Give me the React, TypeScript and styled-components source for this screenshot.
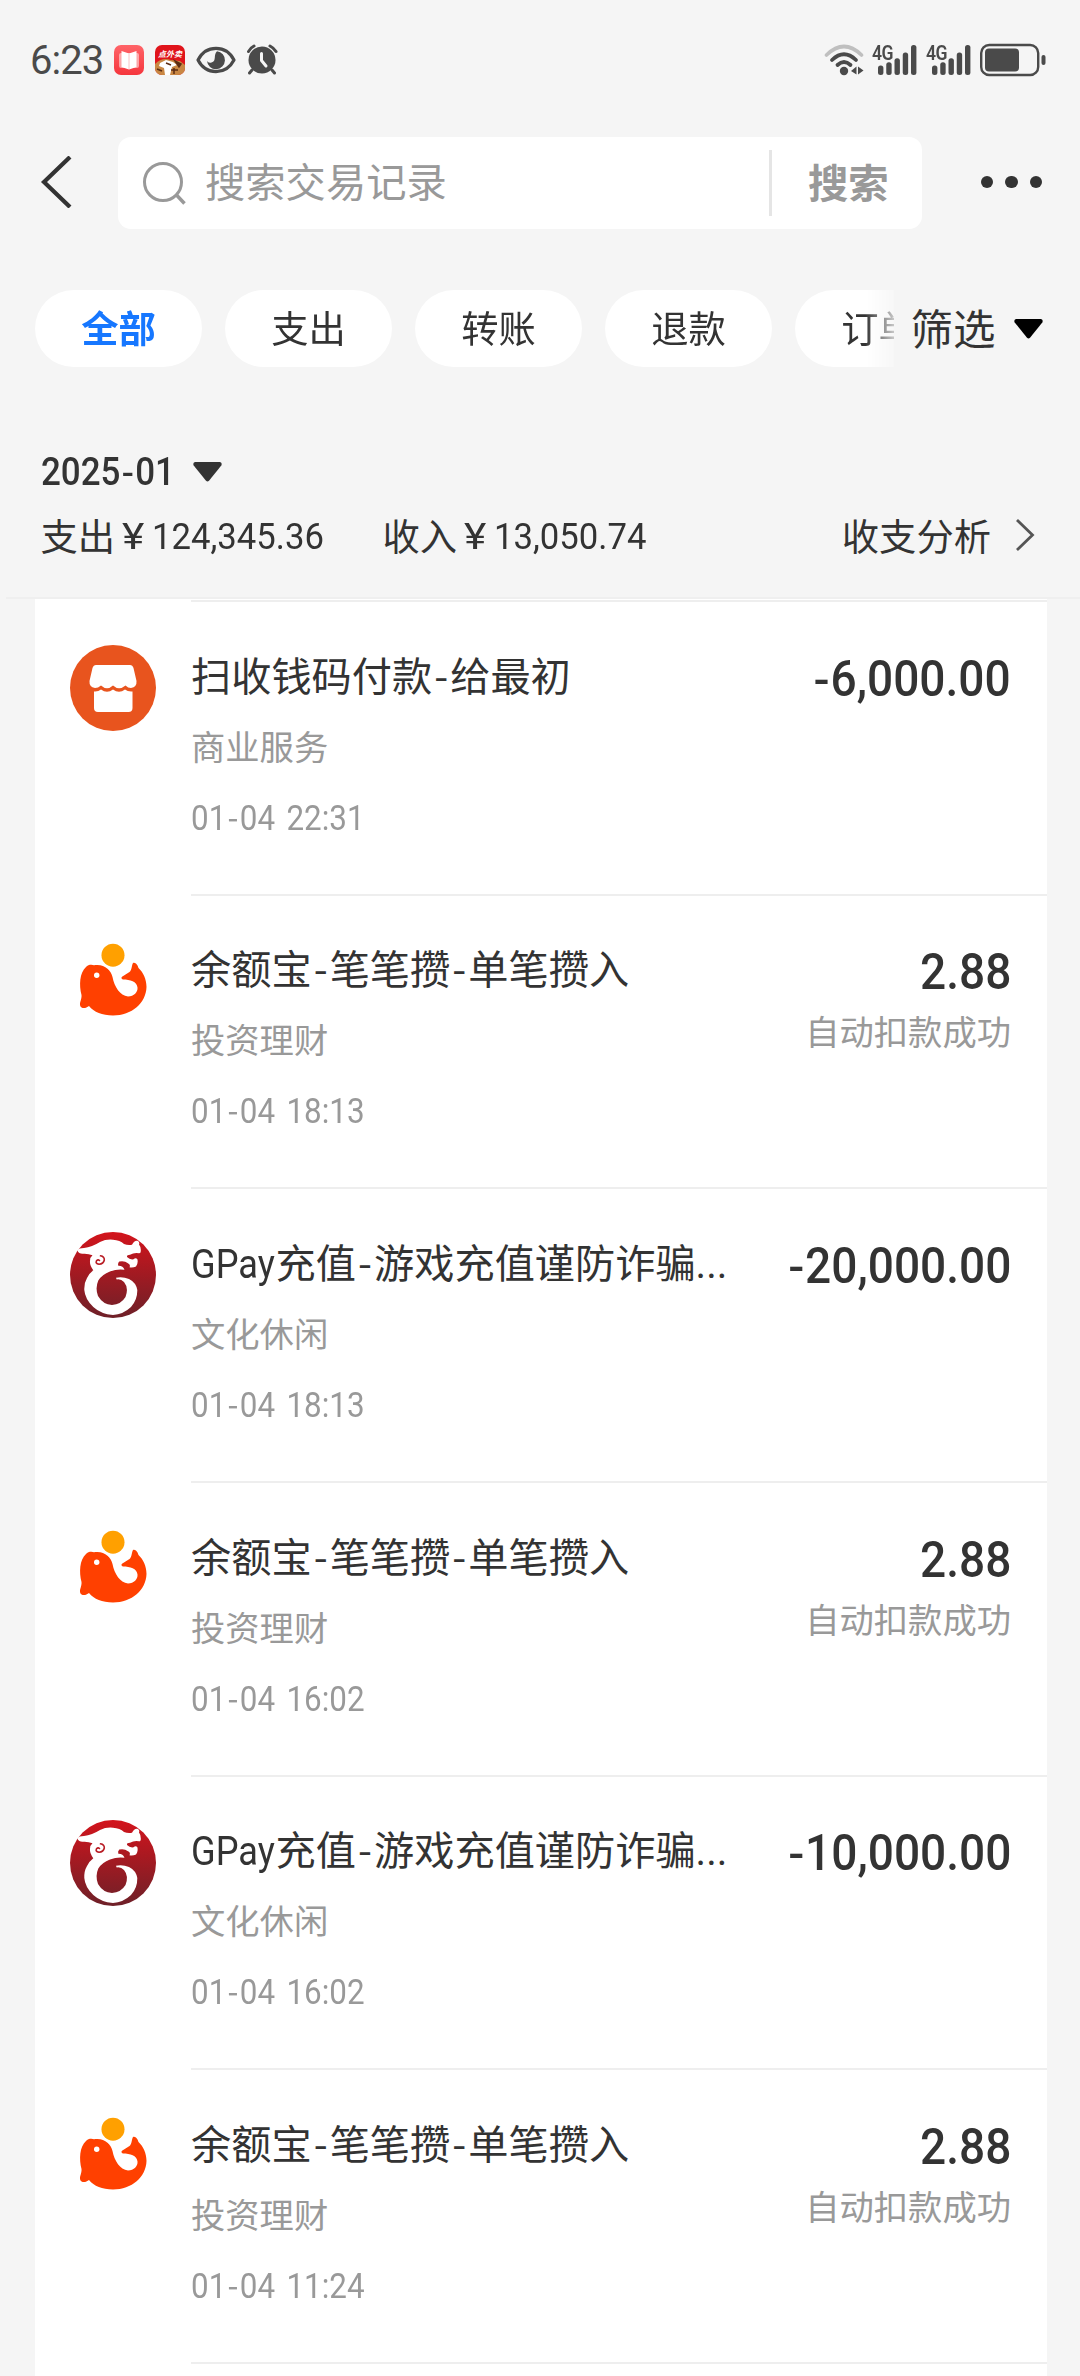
import React from "react";
import styled, { createGlobalStyle } from "styled-components";

const GlobalStyle = createGlobalStyle`
  html, body { margin: 0; padding: 0; background: #f5f5f5; }
  * { box-sizing: border-box; }
`;

const Screen = styled.div`
  width: 1080px;
  height: 2376px;
  overflow: hidden;
  display: flex;
  flex-direction: column;
  background: #f5f5f5;
  color: #333;
  font-family: Roboto, "Noto Sans CJK SC", sans-serif;
  white-space: nowrap;
`;

/* Status bar */

const StatusBar = styled.div`
  height: 119px;
  flex: none;
  display: flex;
  justify-content: space-between;
  align-items: center;
  padding: 0 34px 0 30px;
  color: #4a4a4a;
`;

const StatusGroup = styled.div<{ $gap: number }>`
  display: flex;
  align-items: center;
  gap: ${(p) => p.$gap}px;
`;

const Clock = styled.div`
  width: 73px;
  padding-top: 2px;
  font-size: 40px;
  line-height: 48px;
  letter-spacing: -1px;
`;

const AppBadge = styled.div<{ $fill: string }>`
  width: 30px;
  height: 30px;
  border-radius: 7px;
  overflow: hidden;
  background: ${(p) => p.$fill};
  display: flex;
  flex-direction: column;
  align-items: center;
`;

const BadgeLabel = styled.div`
  height: 14px;
  padding-top: 3px;
  font: italic 700 8px/11px "Noto Sans CJK SC", sans-serif;
  color: #fff;
`;

const Signal = styled.div`
  position: relative;
  width: 46px;
  height: 30px;
`;

const SignalType = styled.span`
  position: absolute;
  left: 0;
  top: -2px;
  font-size: 20px;
  font-weight: 600;
  line-height: 20px;
  letter-spacing: -0.5px;
  transform: scaleX(0.88);
  transform-origin: left;
`;

/* Search header */

const Header = styled.header`
  height: 129px;
  flex: none;
  display: flex;
  align-items: flex-start;
  padding: 18px 38px 0 40px;
`;

const BackButton = styled.div`
  width: 78px;
  height: 90px;
  display: flex;
  align-items: center;
`;

const SearchBox = styled.div`
  width: 804px;
  height: 92px;
  border-radius: 13px;
  background: #fff;
  display: flex;
  align-items: center;
  padding-left: 24px;
  color: #999;
  font-size: 40.3px;
  line-height: 60px;
`;

const Placeholder = styled.div`
  flex: 1;
  padding: 2px 0 0 17px;
`;

const SearchDivider = styled.div`
  width: 3px;
  height: 66px;
  background: #e5e5e5;
`;

const SearchAction = styled.div`
  width: 150px;
  padding: 4px 0 0 36px;
  font-weight: 600;
`;

const MoreButton = styled.div`
  flex: 1;
  height: 90px;
  display: flex;
  align-items: center;
  justify-content: flex-end;
  gap: 12px;
`;

const Dot = styled.i`
  width: 12.5px;
  height: 12.5px;
  border-radius: 50%;
  background: #333;
`;

/* Filter chips */

const Filters = styled.nav`
  height: 119px;
  padding: 42px 0 0 35px;
  flex: none;
  display: flex;
  align-items: flex-start;
`;

const ChipList = styled.div`
  width: 858.5px;
  display: flex;
  gap: 23px;
  overflow: hidden;
  mask-image: linear-gradient(to right, #000 830px, transparent 868px);
`;

const Chip = styled.div<{ $active?: boolean }>`
  flex: none;
  width: 167px;
  height: 77px;
  border-radius: 39px;
  background: #fff;
  display: flex;
  align-items: center;
  justify-content: center;
  padding-bottom: 3px;
  font-size: 37.3px;
  font-weight: ${(p) => (p.$active ? 700 : 400)};
  color: ${(p) => (p.$active ? "#1677ff" : "#333")};
`;

const FilterButton = styled.div`
  height: 77px;
  display: flex;
  align-items: center;
  gap: 18px;
  padding-left: 17px;
  font-size: 42.5px;
`;

const FilterLabel = styled.span`
  padding-bottom: 4px;
`;

/* Monthly summary */

const Summary = styled.section`
  height: 230px;
  flex: none;
  padding: 82px 45px 0 40.5px;
  display: flex;
  flex-direction: column;
`;

const MonthPicker = styled.div`
  height: 46px;
  display: flex;
  align-items: center;
  font-size: 38px;
  font-weight: 500;
`;

const MonthLabel = styled.div`
  width: 152px;
`;

const Totals = styled.div`
  height: 46px;
  margin-top: 17px;
  display: flex;
  align-items: center;
  font-size: 37.3px;
`;

const Total = styled.div<{ $width: number }>`
  width: ${(p) => p.$width}px;
  display: flex;
  align-items: center;
`;

const Yen = styled.span`
  width: 21px;
  margin: 1px 9px 0 7px;
  transform: scaleX(1.14);
  transform-origin: left center;
`;

const Figure = styled.span`
  padding-top: 1px;
`;

const Analysis = styled.div`
  margin-left: auto;
  display: flex;
  align-items: center;
  gap: 24px;
`;

const SummaryRule = styled.div`
  height: 2px;
  margin-left: 6px;
  flex: none;
  background: #efefef;
`;

/* Shared text parts */

const Digits = styled.span<{ $squeeze: number; $anchor?: string }>`
  display: inline-block;
  word-spacing: 4px;
  transform: scaleX(${(p) => p.$squeeze});
  transform-origin: ${(p) => p.$anchor || "left"} center;
`;

const Dash = styled.span<{ $em: number }>`
  display: inline-block;
  width: ${(p) => p.$em}em;
  text-align: center;
  font-family: "Noto Sans CJK SC", sans-serif;
  line-height: 1;
`;

const Latin = styled.span`
  display: inline-block;
  margin-right: -8.5px;
  transform: scaleX(0.9);
  transform-origin: left center;
`;

/* Transactions */

const Card = styled.main`
  margin: 0 33.5px 0 35px;
  flex: 1;
  padding-top: 1px;
  background: #fff;
`;

const Row = styled.article`
  height: 293.7px;
  display: flex;
`;

const Avatar = styled.div`
  width: 156px;
  padding: 45px 0 0 35px;
`;

const Details = styled.div`
  flex: 1;
  border-top: 2px solid #eee;
  padding-right: 35.5px;
  display: flex;
  justify-content: space-between;
`;

const Description = styled.div`
  padding-top: 51.5px;
  display: flex;
  flex-direction: column;
`;

const Title = styled.div`
  height: 48px;
  font-size: 40.2px;
  line-height: 48px;
`;

const Meta = styled.div<{ $top: number }>`
  height: 40px;
  margin-top: ${(p) => p.$top}px;
  font-size: 34.3px;
  line-height: 40px;
  color: #999;
`;

const Value = styled.div`
  padding-top: 46.5px;
  text-align: right;
`;

const Amount = styled.div`
  height: 60px;
  font-size: 50.6px;
  font-weight: 500;
  line-height: 60px;
`;

const State = styled.div`
  margin-top: 11px;
  font-size: 34.3px;
  line-height: 40px;
  color: #999;
`;

function withDashes(text: string, em: number) {
  return text.split("-").map((part, i) => (
    <React.Fragment key={i}>
      {i > 0 && <Dash $em={em}>-</Dash>}
      {part.startsWith("GPay") ? (
        <>
          <Latin>GPay</Latin>
          {part.slice(4)}
        </>
      ) : (
        part
      )}
    </React.Fragment>
  ));
}

const EyeIcon = () => (
  <svg width="40" height="28" viewBox="0 0 40 28">
    <path d="M2 14C10 -1.5 30 -1.5 38 14C30 29.500 10 29.500 2 14Z" fill="none" stroke="#4a4a4a" strokeWidth="3.2" strokeLinejoin="round" />
    <path d="M21 5.200A9 9 0 1 1 11 15Q12.500 17.500 15.500 16.500C21 15 17 9 21 5.200Z" fill="#4a4a4a" />
  </svg>
);

const AlarmIcon = () => (
  <svg width="32" height="31" viewBox="1 0 32 31" fill="none" stroke="#4a4a4a" strokeLinecap="round">
    <circle cx="16" cy="16" r="13.500" fill="#4a4a4a" stroke="none" />
    <path d="M2.500 7.500Q4 4 8 2M30 7.500Q28 4 24 2M6 26L3.500 29M26 26L28.500 29" strokeWidth="3" />
    <path d="M15.500 9.500V16.500L20 22" stroke="#f5f5f5" strokeWidth="3" strokeLinejoin="round" />
  </svg>
);

const BookIcon = () => (
  <svg width="30" height="30" viewBox="0 0 30 30">
    <rect x="5" y="8" width="20" height="15" rx="2" fill="#fff" opacity=".5" />
    <path d="M7.500 6L15 8.500L22.500 6V22L15 24.500L7.500 22Z" fill="#fff" />
    <path d="M15 8.500V24" stroke="#f9b5b7" strokeWidth=".8" />
  </svg>
);

const MascotArt = () => (
  <svg width="30" height="16" viewBox="0 0 30 16">
    <path d="M0 5Q7 -2 16 1L25 2L30 6V16H0Z" fill="#c98743" />
    <path d="M5 4L11 1L18 3L22 6L17 8L15 16H10L9 9L4 7Z" fill="#fff" />
    <path d="M20 2L26 5L24 8ZM11 4l5 2M16 11h7M19 9v6M2 10l5 2" stroke="#5c2d14" strokeWidth="1.500" fill="#5c2d14" />
  </svg>
);

const WifiIcon = () => (
  <svg width="40" height="32" viewBox="0 0 40 32" fill="none" strokeLinecap="round">
    <path d="M2.500 11Q20 -6 37.500 11" stroke="#bfbfbf" strokeWidth="3.600" />
    <path d="M8 16Q20 4.500 32 16" stroke="#4a4a4a" strokeWidth="3.800" />
    <path d="M13.500 21Q20 15 26.500 21" stroke="#4a4a4a" strokeWidth="3.800" />
    <circle cx="20" cy="27" r="4.200" fill="#4a4a4a" />
    <path d="M32.500 22.500V30.500L27 27ZM34 22.500V30.500L39.500 26.500Z" fill="#4a4a4a" />
  </svg>
);

const SignalBars = () => (
  <svg width="46" height="30" viewBox="0 0 46 30" fill="#4a4a4a">
    {[20.5, 17.3, 13.3, 7.6, 0].map((top, i) => (
      <rect key={i} x={6 + i * 8.25} y={top} width="5.400" height={30 - top} rx="2.500" />
    ))}
  </svg>
);

const BatteryIcon = () => (
  <svg width="66" height="34" viewBox="0 0 66 34">
    <rect x="1.200" y="2" width="57" height="30" rx="8" fill="none" stroke="#4a4a4a" strokeWidth="2.400" />
    <rect x="5" y="5.500" width="34" height="23" rx="4" fill="#4a4a4a" />
    <rect x="61.500" y="12" width="4" height="10" rx="2" fill="#4a4a4a" />
  </svg>
);

const Caret = ({ color }: { color: string }) => (
  <svg width="29" height="20" viewBox="0 0 29 20">
    <path d="M2 0H27Q29.500 1 28.300 3.500L16 18.800Q14.500 20.400 13 18.800L.7 3.500Q-.5 1 2 0Z" fill={color} />
  </svg>
);

const ShopIcon = () => (
  <svg width="86" height="86" viewBox="0 0 86 86">
    <circle cx="43" cy="43" r="43" fill="#e8541e" />
    <path d="M26 20H60Q62.500 20 63.500 23L66.500 36Q67 42 61 43Q58 43 55.500 40.500Q49 46 43 40.500Q37 46 31 40.500Q28 43 25 43Q19 42 19.500 36L22.500 23Q23.500 20 26 20Z" fill="#fff" />
    <path d="M24 46.500Q28 47 31 44.500Q37 49 43 44.500Q49 49 55 44.500Q58 47 62.500 46.500V63Q62.500 67 58.500 67H28Q24 67 24 63Z" fill="#fff" />
  </svg>
);

const FishIcon = () => (
  <svg width="86" height="86" viewBox="0 0 86 86">
    <circle cx="43" cy="16.200" r="11.500" fill="#ffa000" />
    <g transform="translate(0 -1)">
      <path d="M16 29C18 26.500 22 26.500 24 27.300C34 25.500 41 32 42.500 39C44.500 49 50 57.500 58 58.500C64 58.500 68 54 67.500 49.500C67 43.500 60 41.500 53 41.500Q50.500 40.500 52 38.800L59.500 34C62 32 61.500 27.500 63 25C65 23.500 68 27 68.500 30C73 34 76.500 41 76.500 49C76 65 62 77.500 43 77.500C32 77.500 24 74 19 68C16 70.500 11.500 71 10.300 68C9 65 12 61 11.500 57C9 47 9.500 35 16 29Z" fill="#ff4000" />
      <circle cx="26.700" cy="37.300" r="2.700" fill="#fff" />
    </g>
  </svg>
);

const DragonIcon = ({ id }: { id: string }) => (
  <svg width="86" height="86" viewBox="0 0 86 86">
    <defs>
      <linearGradient id={id} x1="0" y1="0" x2="0" y2="1">
        <stop offset="0" stopColor="#d3141c" />
        <stop offset="1" stopColor="#6e2028" />
      </linearGradient>
    </defs>
    <circle cx="43" cy="43" r="43" fill={`url(#${id})`} />
    <path
      d="M7.300 18.400Q9 16 14 16Q22 15 30 10Q36 7 43 7.700Q50 8 54 12Q58 13.500 62 12.700Q64.500 8 67.500 8.800Q70 10 69 12.500Q71 15 70.800 18.500Q71 21.500 69 21.300Q64 20.500 60 22.700Q56.500 22.700 57 25Q60 28 63.500 27.300Q65.500 25.500 67.300 27Q68.500 31 66 34.400Q63 36 59.500 35.300Q61 32.500 57.500 31Q55 28.500 49.300 29.400Q47.500 31 48.300 33.700Q53 33.500 54.500 37.800Q47 36.800 40 39.500Q32 42.500 28.300 48.500Q25 56 28 64Q33 72.500 42 73Q51 72.500 55.500 65Q59 56 54 50Q51 46.800 46.700 47.500L46 45.700Q53 44.500 59 47Q66 50.500 67.300 58Q67.500 68 61 75Q53 82.500 43 83Q31 82 23.300 75Q15 67 14.300 58Q14 51 17 46Q19.500 41 23.300 38.200Q19.500 33 20 29Q20 25 22.500 23.200Q18 21.300 13 21.700Q9 22 7.300 18.400Z"
      fill="#fff"
    />
    <path d="M30.500 23.800Q34.500 24.500 34.300 28Q33.500 32 29 32.300Q25 31.500 26.500 28.800Q28 27.200 29.500 28.500" stroke="#b81c24" strokeWidth="1.600" fill="none" strokeLinecap="round" />
  </svg>
);

type Kind = "shop" | "fish" | "dragon";

interface Transaction {
  kind: Kind;
  title: string;
  category: string;
  time: string;
  amount: string;
  state?: string;
}

const saving = (time: string): Transaction => ({
  kind: "fish",
  title: "余额宝-笔笔攒-单笔攒入",
  category: "投资理财",
  time,
  amount: "2.88",
  state: "自动扣款成功",
});

const topUp = (time: string, amount: string): Transaction => ({
  kind: "dragon",
  title: "GPay充值-游戏充值谨防诈骗...",
  category: "文化休闲",
  time,
  amount,
});

const transactions: Transaction[] = [
  { kind: "shop", title: "扫收钱码付款-给最初", category: "商业服务", time: "01-04 22:31", amount: "-6,000.00" },
  saving("01-04 18:13"),
  topUp("01-04 18:13", "-20,000.00"),
  saving("01-04 16:02"),
  topUp("01-04 16:02", "-10,000.00"),
  saving("01-04 11:24"),
];

const TransactionRow = ({ item, index }: { item: Transaction; index: number }) => (
  <Row>
    <Avatar>
      {item.kind === "shop" && <ShopIcon />}
      {item.kind === "fish" && <FishIcon />}
      {item.kind === "dragon" && <DragonIcon id={`dragon-${index}`} />}
    </Avatar>
    <Details>
      <Description>
        <Title>{withDashes(item.title, 0.45)}</Title>
        <Meta $top={26}>{item.category}</Meta>
        <Meta $top={30}>
          <Digits $squeeze={0.915}>{withDashes(item.time, 0.43)}</Digits>
        </Meta>
      </Description>
      <Value>
        <Amount>
          <Digits $squeeze={0.91} $anchor="right">
            {withDashes(item.amount, 0.39)}
          </Digits>
        </Amount>
        {item.state && <State>{item.state}</State>}
      </Value>
    </Details>
  </Row>
);

export default function App() {
  return (
    <Screen>
      <GlobalStyle />
      <StatusBar>
        <StatusGroup $gap={11}>
          <Clock>6:23</Clock>
          <AppBadge $fill="linear-gradient(#ff6468, #f5363d)">
            <BookIcon />
          </AppBadge>
          <AppBadge $fill="#e0141b">
            <BadgeLabel>点外卖</BadgeLabel>
            <MascotArt />
          </AppBadge>
          <EyeIcon />
          <AlarmIcon />
        </StatusGroup>
        <StatusGroup $gap={8}>
          <WifiIcon />
          <Signal>
            <SignalType>4G</SignalType>
            <SignalBars />
          </Signal>
          <Signal>
            <SignalType>4G</SignalType>
            <SignalBars />
          </Signal>
          <BatteryIcon />
        </StatusGroup>
      </StatusBar>

      <Header>
        <BackButton>
          <svg width="32" height="52" viewBox="0 0 32 52">
            <path d="M30 1L4 26L30 51" fill="none" stroke="#333" strokeWidth="4.200" />
          </svg>
        </BackButton>
        <SearchBox>
          <svg width="46" height="46" viewBox="0 0 46 46" fill="none" stroke="#999" strokeWidth="3">
            <circle cx="21" cy="22" r="18.500" />
            <path d="M34 34.500L42.500 43.500" strokeWidth="3.500" />
          </svg>
          <Placeholder>搜索交易记录</Placeholder>
          <SearchDivider />
          <SearchAction>搜索</SearchAction>
        </SearchBox>
        <MoreButton>
          <Dot />
          <Dot />
          <Dot />
        </MoreButton>
      </Header>

      <Filters>
        <ChipList>
          <Chip $active>全部</Chip>
          <Chip>支出</Chip>
          <Chip>转账</Chip>
          <Chip>退款</Chip>
          <Chip>订单</Chip>
        </ChipList>
        <FilterButton>
          <FilterLabel>筛选</FilterLabel>
          <Caret color="#000" />
        </FilterButton>
      </Filters>

      <Summary>
        <MonthPicker>
          <MonthLabel>
            <Digits $squeeze={0.92}>{withDashes("2025-01", 0.42)}</Digits>
          </MonthLabel>
          <Caret color="#333" />
        </MonthPicker>
        <Totals>
          <Total $width={342}>
            支出<Yen>¥</Yen>
            <Figure>
              <Digits $squeeze={0.93}>124,345.36</Digits>
            </Figure>
          </Total>
          <Total $width={300}>
            收入<Yen>¥</Yen>
            <Figure>
              <Digits $squeeze={0.93}>13,050.74</Digits>
            </Figure>
          </Total>
          <Analysis>
            收支分析
            <svg width="20" height="34" viewBox="0 0 20 34">
              <path d="M2 2L17.500 17L2 32" fill="none" stroke="#555" strokeWidth="2.800" />
            </svg>
          </Analysis>
        </Totals>
      </Summary>

      <SummaryRule />
      <Card>
        {transactions.map((item, i) => (
          <TransactionRow key={i} item={item} index={i} />
        ))}
        <Row>
          <Avatar />
          <Details />
        </Row>
      </Card>
    </Screen>
  );
}
